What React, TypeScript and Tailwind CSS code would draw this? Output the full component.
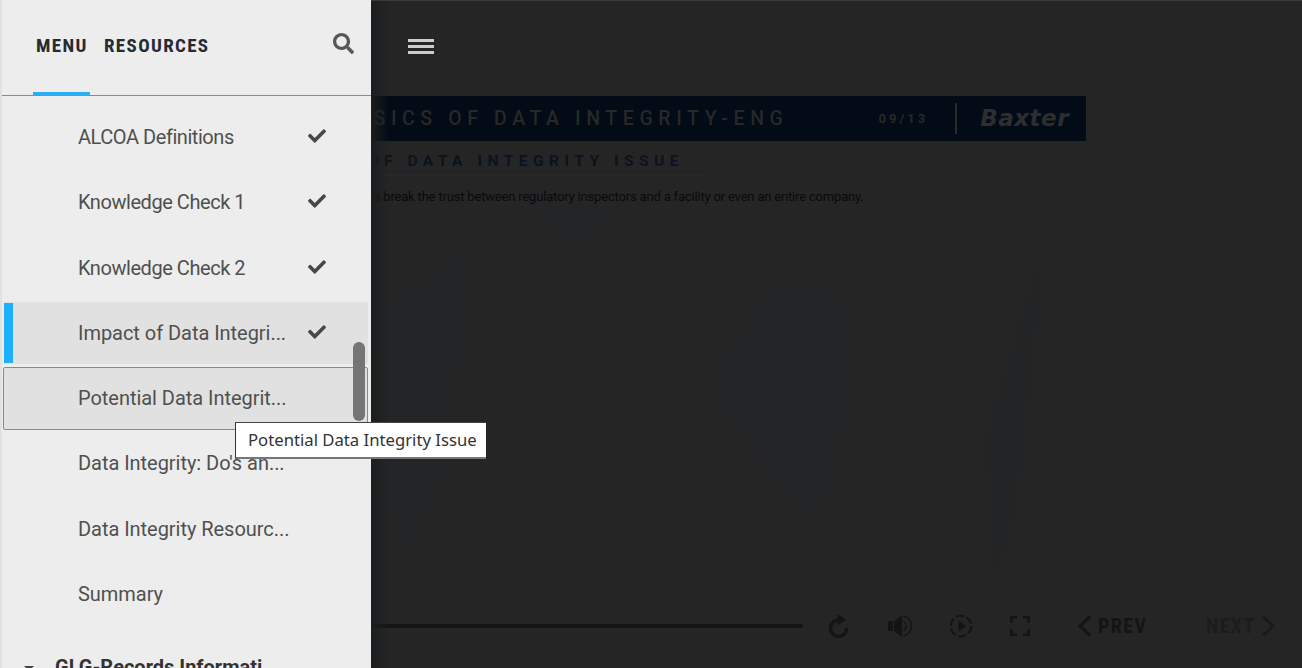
import { FaCheck, FaSearch } from "react-icons/fa";

const font = "font-['Roboto',sans-serif]";
const narrow = "font-['Liberation_Sans_Narrow','Roboto_Condensed','Roboto',sans-serif]";

const items = [
  { label: "ALCOA Definitions", done: true, tight: true },
  { label: "Knowledge Check 1", done: true, tight: true },
  { label: "Knowledge Check 2", done: true, tight: true },
  { label: "Impact of Data Integri...", done: true, active: true },
  { label: "Potential Data Integrit...", focus: true },
  { label: "Data Integrity: Do's an..." },
  { label: "Data Integrity Resourc..." },
  { label: "Summary" },
];

function Row({ label, done, active, focus, tight }: { label: string; done?: boolean; active?: boolean; focus?: boolean; tight?: boolean }) {
  const outer = active ? "pl-[2px] pr-[3px] pt-[1.5px] pb-[1.5px]" : focus ? "pl-[1px] pr-[3px] pt-[1.5px] pb-[1px]" : "pl-[2px]";
  const box = active ? "bg-[#e1e1e1] pl-[74px]" : focus ? "bg-[#e1e1e1] border border-[#8a8a8a] rounded-[2px] pl-[74px]" : "pl-[74px]";
  return (
    <div className={`h-[65.25px] ${outer}`}>
      <div className={`relative h-full flex items-center ${box}`}>
        {active && <div className="absolute left-0 top-[1px] bottom-[1px] w-[9px] bg-[#1fb0fb]" />}
        <span className={`text-[20px] leading-none ${tight ? "tracking-[-0.45px]" : "tracking-[-0.04px]"} text-[#505050] whitespace-nowrap`}>{label}</span>
        {done && <FaCheck className="absolute left-[304px] top-1/2 -translate-y-1/2 -mt-[1px] text-[#474747]" size={18} />}
      </div>
    </div>
  );
}

export default function App() {
  return (
    <div className={`relative w-[1302px] h-[668px] overflow-hidden bg-[#252526] ${font}`}>
      <main className="relative h-full flex flex-col border-t border-[#3a3a3a]">
        <svg className="absolute left-[216px] top-[176px] pointer-events-none" width="870" height="450" viewBox="0 0 870 450" fill="#232526">
          <path d="M309 24 H409 L359 66 Z" />
          <path d="M560 100 L630 116 L640 210 L610 330 L577 330 L490 210 Z" />
          <path d="M830 60 L800 330 L780 400 L770 260 Z" fillOpacity="0.6" />
          <path d="M170 120 L260 70 L230 300 L190 380 L160 300 Z" fillOpacity="0.5" />
        </svg>
        <header className="relative h-[95px] shrink-0 pl-[408px] pt-[38px]">
          <div className="w-[26px] flex flex-col gap-[3px]">
            <span className="h-[3px] bg-[#cccccc]" />
            <span className="h-[3px] bg-[#cccccc]" />
            <span className="h-[3px] bg-[#cccccc]" />
          </div>
        </header>
        <section className="relative w-[870px] ml-[216px] flex-1 min-h-0">
          <div className="h-[45px] bg-[#020b16] flex items-center justify-end text-[#282828]">
            <span className="mr-[90px] text-[19.5px] font-medium tracking-[5.6px] whitespace-nowrap">BASICS OF DATA INTEGRITY-ENG</span>
            <span className="mr-[27px] text-[13px] font-bold tracking-[3px] text-[#282828]">09/13</span>
            <span className="w-[2px] h-[31px] bg-[#2a2a2a] mr-[23px]" />
            <span className="mr-[17px] text-[23px] leading-none font-bold italic tracking-[0.5px] text-[#2e2e2e] font-['DejaVu_Sans',sans-serif]">Baxter</span>
          </div>
          <div className="h-[35px] pt-[8px] w-[488px] border-b border-[#14303f] flex items-center justify-end">
            <span className="text-[15.5px] font-bold tracking-[5.5px] text-[#0a1320] whitespace-nowrap mr-[20px]">OF DATA INTEGRITY ISSUE</span>
          </div>
          <p className="mt-[11px] pl-[151px] text-[13px] leading-[20px] tracking-[-0.18px] text-[#0a0a0a] whitespace-nowrap">es break the trust between regulatory inspectors and a facility or even an entire company.</p>
        </section>
        <footer className="relative h-[84px] shrink-0 flex items-center text-[#141414]">
          <div className="ml-[371px] w-[432px] h-[4px] bg-[#141414] rounded-full" />
          <svg className="ml-[25px]" width="21" height="24" viewBox="0 0 21 24" fill="none" stroke="currentColor">
            <path d="M10 6a8.2 8.2 0 1 0 8.8 8" strokeWidth="3.4" />
            <path d="M9.5 0 L18 5.8 L9.5 11.5 Z" fill="currentColor" stroke="none" />
          </svg>
          <svg className="ml-[39px]" width="26" height="23" viewBox="0 0 26 23" fill="currentColor">
            <rect x="0" y="6" width="5" height="10" />
            <path d="M6 6 L14 0.5 V22 L6 16 Z" />
            <path d="M15.5 6 C19 9 19 13 15.5 16" fill="none" stroke="currentColor" strokeWidth="1.5" />
            <path d="M15.5 1 C26 4 26 18 15.5 21" fill="none" stroke="currentColor" strokeWidth="1.5" />
          </svg>
          <svg className="ml-[35px]" width="24" height="24" viewBox="0 0 24 24" fill="currentColor">
            <circle cx="12" cy="12" r="10.3" fill="none" stroke="currentColor" strokeWidth="2" strokeDasharray="8 2.8" />
            <path d="M9.5 6.5 L17 12 L9.5 17.5 Z" />
          </svg>
          <svg className="ml-[37px]" width="20" height="20" viewBox="0 0 20 20" fill="none" stroke="currentColor" strokeWidth="2.6">
            <path d="M1.3 7 V1.3 H7 M13 1.3 H18.7 V7 M18.7 13 V18.7 H13 M7 18.7 H1.3 V13" />
          </svg>
          <svg className="ml-[47px]" width="15" height="22" viewBox="0 0 15 22" fill="none" stroke="currentColor" strokeWidth="3">
            <path d="M13 1.5 L3 11 L13 20.5" />
          </svg>
          <span className={`ml-[6px] w-[50px] text-[20px] font-bold tracking-[1.4px] leading-none whitespace-nowrap ${narrow}`}>PREV</span>
          <span className={`ml-[58px] w-[53px] text-[20px] font-bold tracking-[1.4px] leading-none whitespace-nowrap text-[#1c1c1c] ${narrow}`}>NEXT</span>
          <svg className="ml-[2px]" width="15" height="22" viewBox="0 0 15 22" fill="none" stroke="#1a1a1a" strokeWidth="3">
            <path d="M2 1.5 L12 11 L2 20.5" />
          </svg>
        </footer>
        <div className="absolute left-[371px] inset-y-0 w-[18px] bg-gradient-to-r from-[#1b1d1e] to-transparent" />
      </main>

      <aside className="absolute inset-y-0 left-0 w-[371px] bg-[#ededed] border-l-[2px] border-[#e2e2e2] overflow-hidden">
        <div className="relative h-[96px] border-b border-[#8c8c8c]">
          <div className={`flex pt-[36px] pl-[31px] ${narrow}`}>
            <span className="relative w-[57px] pl-[3px] h-[59px] text-[19px] leading-[20px] font-bold tracking-[1.35px] text-[#262b33]">
              MENU
              <span className="absolute left-0 right-0 bottom-0 h-[3px] bg-[#2aaef5]" />
            </span>
            <span className="ml-[14px] text-[19px] leading-[20px] font-bold tracking-[1.35px] text-[#262b33]">RESOURCES</span>
          </div>
          <FaSearch className="absolute left-[331px] top-[33px] text-[#575757]" size={21} />
        </div>
        <div className="pt-[8.5px]">
          {items.map((it) => (
            <Row key={it.label} {...it} />
          ))}
          <div className="flex items-center mt-[30px]">
            <span className="ml-[22px] w-0 h-0 border-x-[5px] border-x-transparent border-t-[5px] border-t-[#444] translate-y-[2px]" />
            <span className="ml-[21px] text-[20px] leading-none font-bold text-[#333]">GLG-Records Informati</span>
          </div>
        </div>
        <div className="absolute left-[351px] top-[342px] w-[12px] h-[79px] rounded-full bg-[#757575]" />
      </aside>

      <div className="absolute left-[235px] top-[422px] w-[251px] h-[37px] bg-white border-l border-t border-b-2 border-l-[#333] border-t-[#444] border-b-[#777] flex items-center pl-[12px] text-[16.7px] text-[#333] font-['Noto_Sans',sans-serif] whitespace-nowrap">
        Potential Data Integrity Issue
      </div>
    </div>
  );
}
